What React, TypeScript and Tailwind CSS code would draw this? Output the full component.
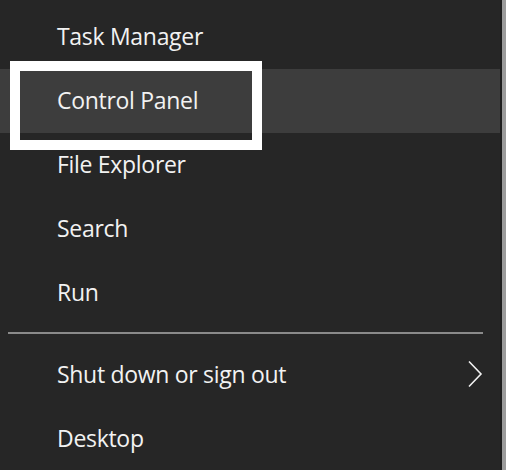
import React from 'react';

const font = { fontFamily: '"Open Sans", "Noto Sans", "Liberation Sans", sans-serif' };

const MenuItem: React.FC<{ label: string; active?: boolean; arrow?: boolean }> = ({ label, active, arrow }) => (
    <div
        className={`flex items-center h-16 pl-[57px] pr-[17px] text-[23px] font-medium text-[#f2f2f2] tracking-[-0.3px] ${
            active ? 'bg-[#3d3d3d]' : ''
        }`}
    >
        <span className="flex-1 leading-none">{label}</span>
        {arrow && (
            <svg width="16" height="28" viewBox="0 0 16 28" fill="none">
                <path d="M2 1.5 L14 14 L2 26.5" stroke="#f2f2f2" strokeWidth="1.6" />
            </svg>
        )}
    </div>
);

export default function App() {
    return (
        <div className="relative flex w-[506px] h-[470px] bg-[#262626] overflow-hidden" style={font}>
            <div className="flex-1 flex flex-col pt-[5px]">
                <MenuItem label="Task Manager" />
                <MenuItem label="Control Panel" active />
                <MenuItem label="File Explorer" />
                <MenuItem label="Search" />
                <MenuItem label="Run" />
                <div className="py-[8px] pl-[8px] pr-[17px]">
                    <div className="h-[2px] bg-[#8a8a8a]" />
                </div>
                <MenuItem label="Shut down or sign out" arrow />
                <MenuItem label="Desktop" />
            </div>
            <div className="w-[2px] bg-[#1e1e1e]" />
            <div className="w-[4px] bg-[#9a9a9a]" />

            {/* highlight annotation box */}
            <div className="absolute left-[10px] top-[61px] w-[252px] h-[89px] border-[10px] border-white" />
        </div>
    );
}
